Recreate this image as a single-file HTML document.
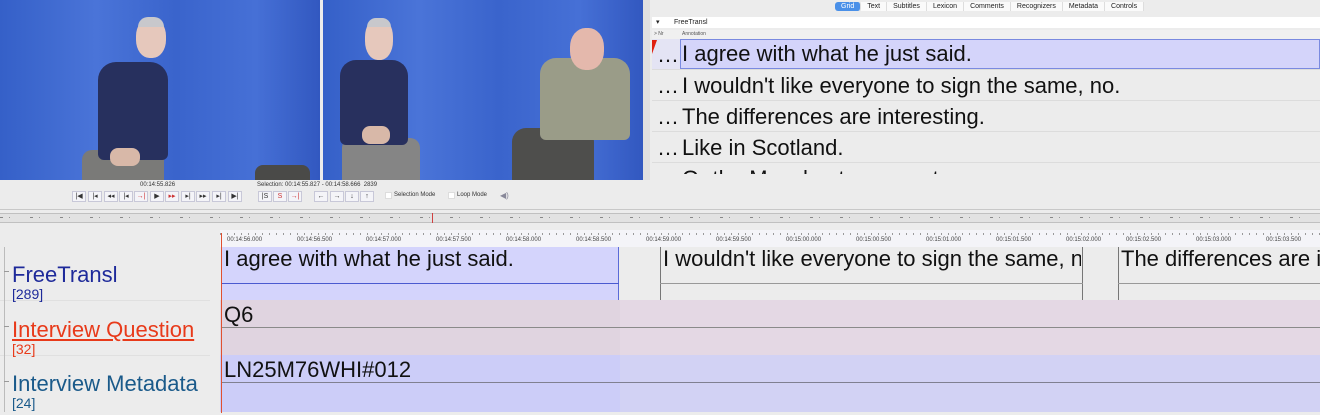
<!DOCTYPE html>
<html><head><meta charset="utf-8"><style>
*{margin:0;padding:0;box-sizing:border-box}
html,body{width:1320px;height:415px;overflow:hidden}
body{background:#ececec;font-family:"Liberation Sans",sans-serif;position:relative}
.a{position:absolute}
.vid{background:linear-gradient(90deg,#3560c8 0%,#4a74d8 30%,#3a64cc 55%,#4670d6 80%,#3258c0 100%)}
.btn{position:absolute;top:191px;height:11px;width:14px;border:1px solid #c8c8d8;background:#f4f4f8;font-size:7px;line-height:9px;text-align:center;color:#333}
.tab{display:inline-block;font-size:7px;padding:1px 6px;color:#222;border-right:1px solid #ddd;background:#fafafa}
.row{position:absolute;left:652px;width:668px;height:31px;border-bottom:1px solid #dcdcdc;font-size:22px;line-height:31px;color:#111;overflow:hidden}
.row .d{position:absolute;left:5px;width:25px}
.row .t{position:absolute;left:30px;white-space:nowrap}
.rl{position:absolute;top:237px;font-size:6px;color:#444}
.lab{position:absolute;left:12px;font-size:22px;white-space:nowrap;line-height:1}
.num{position:absolute;left:12px;font-size:14px;line-height:1}
.ann{position:absolute;font-size:22px;color:#111;white-space:nowrap;overflow:hidden}
</style></head><body>
<div class="a vid" style="left:0;top:0;width:320px;height:180px"></div>
<div class="a vid" style="left:323px;top:0;width:320px;height:180px"></div>
<div class="a" style="left:82px;top:150px;width:82px;height:30px;background:#7a7a78;border-radius:10px 10px 0 0"></div>
<div class="a" style="left:98px;top:62px;width:70px;height:98px;background:#27305e;border-radius:18px 18px 6px 6px"></div>
<div class="a" style="left:110px;top:148px;width:30px;height:18px;background:#d8b8a8;border-radius:8px"></div>
<div class="a" style="left:136px;top:18px;width:30px;height:40px;background:#e6c8bc;border-radius:45%"></div>
<div class="a" style="left:138px;top:17px;width:26px;height:10px;background:#c8c8cc;border-radius:12px 12px 0 0"></div>
<div class="a" style="left:255px;top:165px;width:55px;height:15px;background:#4a4a48;border-radius:8px 8px 0 0"></div>
<div class="a" style="left:342px;top:138px;width:78px;height:42px;background:#858585;border-radius:10px 10px 0 0"></div>
<div class="a" style="left:340px;top:60px;width:68px;height:85px;background:#28305e;border-radius:16px 16px 6px 6px"></div>
<div class="a" style="left:362px;top:126px;width:28px;height:18px;background:#d8b8a8;border-radius:8px"></div>
<div class="a" style="left:365px;top:18px;width:28px;height:42px;background:#e6c8bc;border-radius:45%"></div>
<div class="a" style="left:367px;top:18px;width:24px;height:9px;background:#c8c8cc;border-radius:12px 12px 0 0"></div>
<div class="a" style="left:512px;top:128px;width:82px;height:52px;background:#4e4e4c;border-radius:14px 14px 0 0"></div>
<div class="a" style="left:540px;top:58px;width:90px;height:82px;background:#9a9c88;border-radius:16px 16px 6px 6px"></div>
<div class="a" style="left:570px;top:28px;width:34px;height:42px;background:#e4b8ac;border-radius:45%"></div>
<div class="a" style="left:643px;top:0;width:7px;height:180px;background:#e0e0e0"></div>
<div class="a" style="left:835px;top:2px;height:10px;white-space:nowrap;font-size:0">
<span class="tab" style="background:#4a90e8;color:#fff;border-radius:3px">Grid</span><span class="tab">Text</span><span class="tab">Subtitles</span><span class="tab">Lexicon</span><span class="tab">Comments</span><span class="tab">Recognizers</span><span class="tab">Metadata</span><span class="tab">Controls</span></div>
<div class="a" style="left:652px;top:17px;width:668px;height:11px;background:#fff;font-size:7px;line-height:11px;color:#222"><span style="position:absolute;left:4px">▾</span><span style="position:absolute;left:22px">FreeTransl</span></div>
<div class="a" style="left:652px;top:30px;width:668px;height:9px;font-size:5px;line-height:9px;color:#555;background:#f0f0f0"><span style="position:absolute;left:2px">&gt; Nr</span><span style="position:absolute;left:30px">Annotation</span></div>
<div class="row" style="top:39px;background:#e4e4f4"><span class="d">…</span><span class="t" style="left:28px;width:640px;height:30px;background:#d4d4fa;border:1px solid #7a8ae0;padding-left:1px;line-height:28px">I agree with what he just said.</span></div>
<div class="a" style="left:652px;top:40px;width:0;height:0;border-left:5px solid #e02010;border-bottom:14px solid transparent"></div>
<div class="row" style="top:70px"><span class="d">…</span><span class="t">I wouldn't like everyone to sign the same, no.</span></div>
<div class="row" style="top:101px"><span class="d">…</span><span class="t">The differences are interesting.</span></div>
<div class="row" style="top:132px"><span class="d">…</span><span class="t">Like in Scotland.</span></div>
<div class="a" style="left:652px;top:163px;width:668px;height:11px;overflow:hidden;font-size:22px;line-height:31px;color:#111"><span style="position:absolute;left:5px">…</span><span style="position:absolute;left:30px;white-space:nowrap">Or the Manchester area etc.</span></div>
<div class="a" style="left:140px;top:182px;font-size:6px;color:#333">00:14:55.826</div>
<div class="a" style="left:257px;top:182px;font-size:6px;color:#333">Selection: 00:14:55.827 - 00:14:58.666&nbsp; 2839</div>
<div class="btn" style="left:72px">|◀</div><div class="btn" style="left:88px">|◂</div><div class="btn" style="left:104px">◂◂</div><div class="btn" style="left:119px">|◂</div><div class="btn" style="left:134px;color:#c33">→|</div><div class="btn" style="left:150px">▶</div><div class="btn" style="left:165px;color:#c33">▸▸</div><div class="btn" style="left:181px">▸|</div><div class="btn" style="left:196px">▸▸</div><div class="btn" style="left:212px">▸|</div><div class="btn" style="left:228px">▶|</div>
<div class="btn" style="left:258px">|S</div><div class="btn" style="left:273px;color:#c33">S</div><div class="btn" style="left:288px;color:#c33">→|</div>
<div class="btn" style="left:314px">←</div><div class="btn" style="left:330px">→</div><div class="btn" style="left:345px">↓</div><div class="btn" style="left:360px">↑</div>
<div class="a" style="left:385px;top:192px;width:7px;height:7px;background:#fff;border:1px solid #ddd"></div>
<div class="a" style="left:394px;top:192px;font-size:6px;color:#333">Selection Mode</div>
<div class="a" style="left:448px;top:192px;width:7px;height:7px;background:#fff;border:1px solid #ddd"></div>
<div class="a" style="left:457px;top:192px;font-size:6px;color:#333">Loop Mode</div>
<div class="a" style="left:500px;top:191px;font-size:8px;color:#889">◀)</div>
<div class="a" style="left:0;top:209px;width:1320px;height:1px;background:#c8c8c8"></div>
<div class="a" style="left:0;top:213px;width:1320px;height:10px;background:#e2e2e2;border-top:1px solid #c0c0c0;border-bottom:1px solid #c0c0c0"></div>
<div class="a" style="left:0;top:217px;width:1320px;height:1px;background:repeating-linear-gradient(90deg,#888 0 3px,transparent 3px 9px,#999 9px 10px,transparent 10px 30px)"></div>
<div class="a" style="left:432px;top:213px;width:1px;height:10px;background:#d04040"></div>
<div class="a" style="left:220px;top:230px;width:1100px;height:17px;background:#f4f4f8"></div>
<div class="a" style="left:220px;top:233px;width:1100px;height:2px;background:repeating-linear-gradient(90deg,#999 0 1px,transparent 1px 7px)"></div>
<div class="rl" style="left:227px">00:14:56.000</div><div class="rl" style="left:297px">00:14:56.500</div><div class="rl" style="left:366px">00:14:57.000</div><div class="rl" style="left:436px">00:14:57.500</div><div class="rl" style="left:506px">00:14:58.000</div><div class="rl" style="left:576px">00:14:58.500</div><div class="rl" style="left:646px">00:14:59.000</div><div class="rl" style="left:716px">00:14:59.500</div><div class="rl" style="left:786px">00:15:00.000</div><div class="rl" style="left:856px">00:15:00.500</div><div class="rl" style="left:926px">00:15:01.000</div><div class="rl" style="left:996px">00:15:01.500</div><div class="rl" style="left:1066px">00:15:02.000</div><div class="rl" style="left:1126px">00:15:02.500</div><div class="rl" style="left:1196px">00:15:03.000</div><div class="rl" style="left:1266px">00:15:03.500</div>
<div class="a" style="left:220px;top:247px;width:1100px;height:53px;background:#ececec"></div>
<div class="a" style="left:220px;top:300px;width:1100px;height:55px;background:#e4d8e4"></div>
<div class="a" style="left:220px;top:300px;width:400px;height:55px;background:#e0d4e0"></div>
<div class="a" style="left:220px;top:355px;width:1100px;height:57px;background:#d2d2f4"></div>
<div class="a" style="left:220px;top:355px;width:400px;height:57px;background:#cccdf8"></div>
<div class="a" style="left:0;top:300px;width:210px;height:1px;background:#e0e0e0"></div>
<div class="a" style="left:0;top:355px;width:210px;height:1px;background:#e0e0e0"></div>
<div class="a" style="left:4px;top:247px;width:1px;height:165px;background:#bbb"></div>
<div class="a" style="left:4px;top:271px;width:5px;height:1px;background:#999"></div>
<div class="a" style="left:4px;top:326px;width:5px;height:1px;background:#999"></div>
<div class="a" style="left:4px;top:381px;width:5px;height:1px;background:#999"></div>
<div class="a" style="left:221px;top:247px;width:398px;height:53px;background:#d4d4fc;border-right:1px solid #5a6ad8"></div>
<div class="a" style="left:221px;top:283px;width:398px;height:1px;background:#4a5ad0"></div>
<div class="ann" style="left:224px;top:246px">I agree with what he just said.</div>
<div class="a" style="left:660px;top:247px;width:423px;height:53px;border-left:1px solid #777;border-right:1px solid #777"></div>
<div class="a" style="left:660px;top:283px;width:423px;height:1px;background:#999"></div>
<div class="ann" style="left:663px;top:246px;width:418px">I wouldn't like everyone to sign the same, no.</div>
<div class="a" style="left:1118px;top:247px;width:202px;height:53px;border-left:1px solid #777"></div>
<div class="a" style="left:1118px;top:283px;width:202px;height:1px;background:#999"></div>
<div class="ann" style="left:1121px;top:246px;width:199px">The differences are interesting.</div>
<div class="a" style="left:221px;top:327px;width:1099px;height:1px;background:#8a8a8a"></div>
<div class="ann" style="left:224px;top:302px">Q6</div>
<div class="a" style="left:221px;top:382px;width:1099px;height:1px;background:#808090"></div>
<div class="ann" style="left:224px;top:357px">LN25M76WHI#012</div>
<div class="a" style="left:221px;top:233px;width:1px;height:180px;background:#e05030"></div>
<div class="lab" style="top:264px;color:#1e2a9a">FreeTransl</div>
<div class="num" style="top:287px;color:#1e2a9a">[289]</div>
<div class="lab" style="top:319px;color:#e83a1a;text-decoration:underline">Interview Question</div>
<div class="num" style="top:342px;color:#e83a1a">[32]</div>
<div class="lab" style="top:373px;color:#1a5a8a">Interview Metadata</div>
<div class="num" style="top:396px;color:#1a5a8a">[24]</div>
</body></html>
